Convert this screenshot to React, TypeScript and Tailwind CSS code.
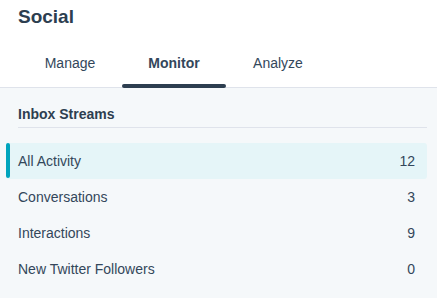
import React from "react";

const rows = [
  { label: "All Activity", count: 12, active: true },
  { label: "Conversations", count: 3 },
  { label: "Interactions", count: 9 },
  { label: "New Twitter Followers", count: 0 },
];

const tabs = [
  { label: "Manage" },
  { label: "Monitor", active: true },
  { label: "Analyze" },
];

export default function App() {
  return (
    <div className="w-[437px] h-[298px] overflow-hidden bg-[#f5f8fa] font-['Liberation_Sans',Arial,sans-serif] text-[#33475b]">
      <div className="bg-white border-b border-[#dfe3eb]">
        <div className="px-[18px]">
          <h1 className="pt-[5px] text-[19px] leading-[23px] font-bold text-[#2d3e50]">Social</h1>
          <div className="flex">
            {tabs.map((t) => (
              <div
                key={t.label}
                className={`relative w-[104px] h-[59px] pt-[25px] text-center text-[14px] leading-[20px] ${
                  t.active ? "font-bold text-[#33475b]" : "text-[#33475b]"
                }`}
              >
                {t.label}
                {t.active && (
                  <span className="absolute left-0 right-0 bottom-[-1px] h-[4px] rounded-full bg-[#2d3e50]" />
                )}
              </div>
            ))}
          </div>
        </div>
      </div>
      <div className="pl-[18px] pr-[10px]">
        <div className="pt-[16px] pb-[3px] border-b border-[#dfe3eb] text-[14px] leading-[20px] font-bold text-[#2d3e50]">
          Inbox Streams
        </div>
      </div>
      <div className="ml-[6px] mr-[10px] mt-[15px] flex flex-col">
        {rows.map((r) => (
          <div
            key={r.label}
            className={`relative flex h-[36px] items-center justify-between pl-[12px] pr-[12px] text-[14px] leading-[20px] rounded-[3px] ${
              r.active ? "bg-[#e5f5f8]" : ""
            }`}
          >
            {r.active && (
              <span className="absolute left-0 top-0 bottom-[1px] w-[4px] rounded-[2px] bg-[#00a4bd]" />
            )}
            <span>{r.label}</span>
            <span>{r.count}</span>
          </div>
        ))}
      </div>
    </div>
  );
}
